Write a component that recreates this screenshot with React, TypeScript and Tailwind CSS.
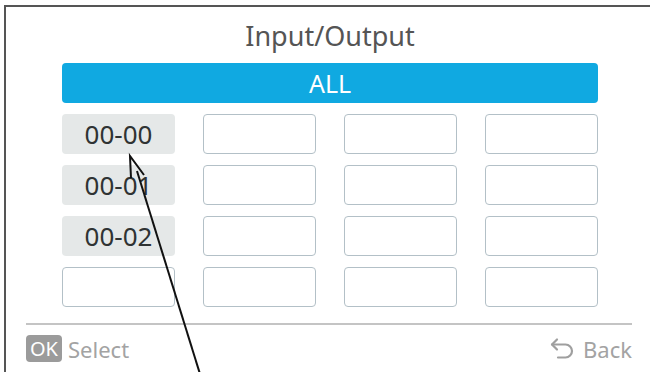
import React from "react";

const cells: (string | null)[][] = [
  ["00-00", null, null, null],
  ["00-01", null, null, null],
  ["00-02", null, null, null],
  [null, null, null, null],
];

export default function App() {
  return (
    <div
      className="relative w-[650px] h-[372px] overflow-hidden bg-white pl-[4px] pt-[5px]"
      style={{ fontFamily: '"Noto Sans", "Open Sans", sans-serif' }}
    >
      <div className="h-[400px] border-l-2 border-t-2 border-[#555555] flex flex-col">
        <div className="pt-[10px] pl-[56px] w-[592px] text-center text-[27px] leading-[38px] text-[#555555]">
          Input/Output
        </div>
        <div className="ml-[56px] mt-[8px] w-[536px] h-[40px] rounded-[4px] bg-[#10a9e1] flex items-center justify-center text-white text-[25px] leading-none">
          ALL
        </div>
        <div className="ml-[56px] mt-[11px] w-[536px] grid grid-cols-4 gap-x-[28px] gap-y-[11px]">
          {cells.flat().map((c, i) =>
            c ? (
              <div
                key={i}
                className="h-[40px] rounded-[4px] bg-[#e5e8e8] flex items-center justify-center text-[26px] leading-none text-[#2f3333]"
              >
                {c}
              </div>
            ) : (
              <div
                key={i}
                className="h-[40px] rounded-[4px] border border-[#b3c0c7] bg-white"
              />
            )
          )}
        </div>
        <div className="ml-[20px] mt-[16px] w-[606px] h-[2px] bg-[#c4c4c4]" />
        <div className="ml-[20px] mt-[10px] w-[606px] flex items-center justify-between">
          <div className="flex items-center gap-[6px]">
            <div className="w-[36px] h-[27px] rounded-[4px] bg-[#9b9b9b] flex items-center justify-center text-white text-[20px] leading-none">
              OK
            </div>
            <span className="text-[22px] leading-none text-[#a3a3a3]">Select</span>
          </div>
          <div className="flex items-center gap-[9px]">
            <svg width="24" height="24" viewBox="0 0 24 24" fill="none" stroke="#9f9f9f" strokeWidth="2.2" strokeLinecap="round" strokeLinejoin="round">
              <path d="M7 2.5 2 7.5l5 5" />
              <path d="M2 7.5h13.5a6.5 6.5 0 0 1 0 13H8" />
            </svg>
            <span className="text-[22px] leading-none text-[#a3a3a3]">Back</span>
          </div>
        </div>
      </div>
      <svg className="absolute left-0 top-0 pointer-events-none" width="650" height="372" viewBox="0 0 650 372" fill="none">
        <polyline points="131,178 130,156 144,175" stroke="#111" strokeWidth="2" strokeLinejoin="miter" />
        <line x1="137" y1="171" x2="200" y2="374" stroke="#111" strokeWidth="2" />
      </svg>
    </div>
  );
}
